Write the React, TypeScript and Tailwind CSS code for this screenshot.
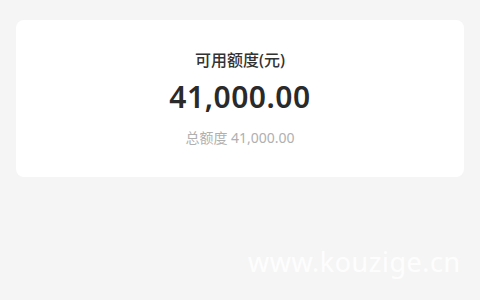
import React from 'react';

const App = () => {
    return (
        <div
            className="w-[480px] h-[300px] bg-[#f5f5f5] px-4 pt-5 overflow-hidden flex flex-col"
            style={{ fontFamily: '"Noto Sans", "Noto Sans CJK SC", sans-serif' }}
        >
            <section className="bg-white rounded-lg h-[157px] flex flex-col items-center pt-[26px]">
                <h1 className="text-[16px] leading-[28px] font-medium text-[#333]">
                    可用额度(元)
                </h1>
                <p className="mt-[3px] text-[30px] leading-[40px] font-semibold text-[#2a2a2a] tracking-[0.5px]">
                    41,000.00
                </p>
                <p className="mt-[11px] text-[14px] leading-[20px] text-[#b0b0b0]">
                    总额度 41,000.00
                </p>
            </section>
            <div className="mt-[70px] pl-[232px] text-[27px] leading-[30px] text-white/80 tracking-[0.5px]">
                www.kouzige.cn
            </div>
        </div>
    );
};

export default App;
